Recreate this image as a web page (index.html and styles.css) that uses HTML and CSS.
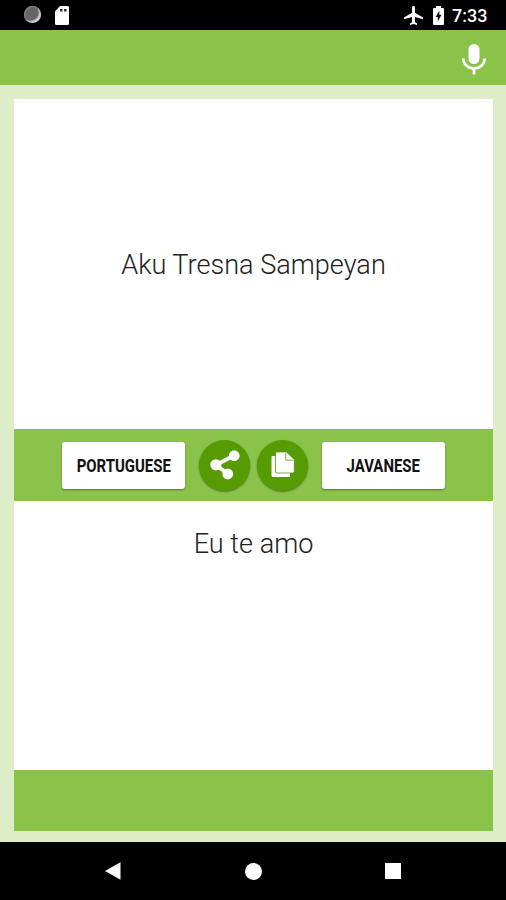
FILE: index.html
```html
<!DOCTYPE html>
<html lang="en">
<head>
    <meta charset="UTF-8">
    <meta name="viewport" content="width=device-width, initial-scale=1.0">
    <title>Portuguese Javanese Translator</title>
    <link rel="stylesheet" href="styles.css">
</head>
<body>
    <div class="status-bar">
        <div class="status-left">
            <span class="sync"></span>
            <svg class="sd-card" width="14" height="19" viewBox="0 0 14 19">
                <path fill="#fff" d="M5 0h7.500a1.500 1.500 0 0 1 1.500 1.500v16a1.500 1.500 0 0 1-1.500 1.500h-11a1.500 1.500 0 0 1-1.500-1.500v-12z"/>
                <path fill="#333" d="M5 3h2.500v2.500H5zM9 3h2.500v2.500H9z"/>
            </svg>
        </div>
        <div class="status-right">
            <svg width="19" height="19" viewBox="2 2 19 20" preserveAspectRatio="none">
                <path fill="#fff" d="M21 16v-2l-8-5V3.500c0-.83-.67-1.500-1.500-1.500S10 2.670 10 3.500V9l-8 5v2l8-2.500V19l-2 1.500V22l3.500-1 3.500 1v-1.500L13 19v-5.500l8 2.500z"/>
            </svg>
            <svg class="battery" width="11" height="19" viewBox="0 0 11 19">
                <path fill="#fff" d="M3 0h5v2h2a1 1 0 0 1 1 1v15a1 1 0 0 1-1 1H1a1 1 0 0 1-1-1V3a1 1 0 0 1 1-1h2z"/>
                <path fill="#111" d="M6.300 4.500v4.200h2.200L4.800 15.500v-4.600H2.700z"/>
            </svg>
            <span class="time">7:33</span>
        </div>
    </div>

    <header class="app-bar">
        <svg width="24" height="31" viewBox="0 0 24 31">
            <rect x="6.500" y="0" width="11" height="20" rx="5.500" fill="#fff"/>
            <path d="M1.200 14.500a10.800 9.800 0 0 0 21.600 0M12 24v6.500" fill="none" stroke="#fff" stroke-width="2.700"/>
        </svg>
    </header>

    <main>
        <section class="source">
            <p>Aku Tresna Sampeyan</p>
        </section>

        <div class="controls">
            <button class="language"><span>PORTUGUESE</span></button>
            <button class="round">
                <svg width="30" height="30" viewBox="0 0 30 30">
                    <path d="M24 5.500L6 15l12 9" fill="none" stroke="#fff" stroke-width="3.800"/>
                    <circle cx="24.200" cy="5.700" r="5.400" fill="#fff"/>
                    <circle cx="5.900" cy="14.800" r="5.600" fill="#fff"/>
                    <circle cx="17.800" cy="24" r="5.400" fill="#fff"/>
                </svg>
            </button>
            <button class="round">
                <svg width="24" height="26" viewBox="0 0 24 26">
                    <path d="M1 4h4v17h14v4H2a1.500 1.500 0 0 1-1.500-1.500V4.500z" fill="#fff"/>
                    <path d="M6.500 0h9l7.800 7.500v12a1.500 1.500 0 0 1-1.500 1.500H6a1.500 1.500 0 0 1-1.500-1.500v-18A1.500 1.500 0 0 1 6.500 0z" fill="#fff" stroke="#569b02" stroke-width=".8"/>
                    <path d="M14.800 1v7.200h7.500" fill="none" stroke="#569b02" stroke-width=".8"/>
                </svg>
            </button>
            <button class="language"><span>JAVANESE</span></button>
        </div>

        <section class="result">
            <p>Eu te amo</p>
        </section>
        <div class="card-footer"></div>
    </main>

    <nav class="nav-bar">
        <svg width="16" height="18" viewBox="0 0 16 18"><path fill="#fff" d="M0 9L15.500.3v17.400z"/></svg>
        <span class="home"></span>
        <span class="recent"></span>
    </nav>
</body>
</html>
```

FILE: styles.css
```css
* {
    box-sizing: border-box;
}

body {
    display: flex;
    flex-direction: column;
    height: 900px;
    margin: 0;
    font-family: Roboto, sans-serif;
    background-color: #dcedc8;
    overflow: hidden;
}

svg {
    display: block;
    flex: none;
}

p {
    margin: 0;
}

.status-bar {
    display: flex;
    justify-content: space-between;
    height: 30px;
    padding: 6px 18px 0 24px;
    background-color: #000;
}

.status-left, .status-right {
    display: flex;
    align-items: flex-start;
}

.sync {
    width: 17px;
    height: 17px;
    margin-right: 14px;
    border-radius: 50%;
    background-color: #666;
    box-shadow: inset -2px -2px 1px #ccc, inset 1px 1px 1px #888;
}

.battery {
    margin: 0 8px 0 10px;
}

.time {
    width: 36px;
    color: #fff;
    font-size: 18px;
    font-weight: 500;
    line-height: 20px;
    white-space: nowrap;
}

.app-bar {
    display: flex;
    justify-content: flex-end;
    height: 55px;
    padding: 14px 20px 0 0;
    background-color: #8bc34a;
}

main {
    display: flex;
    flex-direction: column;
    height: 732px;
    margin: 14px 13px 11px 14px;
    background-color: #fff;
}

.source, .result {
    color: #222;
    font-size: 27.100px;
    font-weight: 300;
    text-align: center;
}

.source {
    display: flex;
    align-items: center;
    justify-content: center;
    height: 330px;
    padding-top: 2px;
}

.controls {
    display: flex;
    align-items: center;
    justify-content: center;
    height: 72px;
    background-color: #8bc34a;
}

.language {
    width: 123px;
    height: 47px;
    padding: 0;
    border: none;
    border-radius: 3px;
    background-color: #fff;
    color: #111;
    font-family: Roboto, sans-serif;
    font-size: 18px;
    font-weight: 700;
    box-shadow: 0 1px 2px rgba(0, 0, 0, 0.4);
}

.language span {
    display: inline-block;
    transform: scaleX(0.83);
    transform-origin: center;
    margin: 0 -20px;
}

.round {
    display: flex;
    align-items: center;
    justify-content: center;
    width: 51px;
    height: 51px;
    padding: 0;
    border: none;
    border-radius: 50%;
    background-color: #569b02;
    box-shadow: 0 1px 2px rgba(0, 0, 0, 0.4);
}

.round:nth-child(2) {
    margin: 0 7px 0 14px;
}

.round:nth-child(3) {
    margin-right: 14px;
}

.result {
    height: 269px;
    padding-top: 27px;
}

.card-footer {
    height: 61px;
    background-color: #8bc34a;
}

.nav-bar {
    display: flex;
    align-items: center;
    justify-content: space-between;
    height: 58px;
    padding: 0 105px;
    background-color: #000;
}

.home {
    width: 17px;
    height: 17px;
    border-radius: 50%;
    background-color: #fff;
}

.recent {
    width: 16px;
    height: 16px;
    background-color: #fff;
}
```
